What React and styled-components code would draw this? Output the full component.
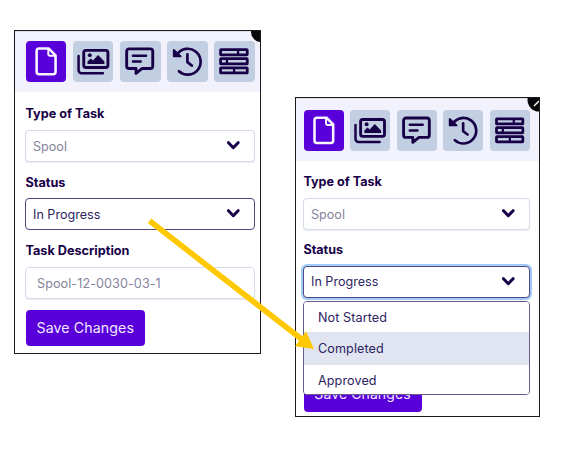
import React from "react";
import styled, { createGlobalStyle, css } from "styled-components";

const Global = createGlobalStyle`
  *, *::before, *::after { box-sizing: border-box; }
  body { margin: 0; background: #fff; font-family: Inter, "Liberation Sans", sans-serif; color: #180048; }
`;

const Canvas = styled.main`
  position: relative;
  display: flex;
  align-items: flex-start;
  gap: 34px;
  width: 572px;
  height: 451px;
  padding: 30px 0 0 14px;
  overflow: hidden;
`;

const Panel = styled.section`
  position: relative;
  display: flex;
  flex-direction: column;
  flex: none;
  width: ${(p) => (p.$second ? 245 : 247)}px;
  height: ${(p) => (p.$second ? 320 : 324)}px;
  margin-top: ${(p) => (p.$second ? 67 : 0)}px;
  border: 1px solid #1c1820;
  background: #fff;
  overflow: hidden;
`;

const Toolbar = styled.nav`
  display: flex;
  justify-content: space-between;
  flex: none;
  height: ${(p) => (p.$second ? 63 : 61)}px;
  padding: ${(p) => (p.$second ? "12px 9px 0 7.5px" : "10px 5px 0 10.5px")};
  background: #f2f2fc;
  box-shadow: inset 0 1px #dfdfe7;
`;

const Tool = styled.button`
  display: block;
  width: ${(p) => (p.$second ? 40.3 : 40.8)}px;
  height: 41px;
  padding: 0;
  border: 0;
  border-radius: 4px;
  background: ${(p) => (p.$active ? "#5900da" : "#c2cee1")};
  color: ${(p) => (p.$active ? "#f8f5ff" : "#180048")};
  svg { display: block; width: 100%; height: 100%; }
`;

const Form = styled.div`
  display: flex;
  flex-direction: column;
  align-items: flex-start;
  padding: ${(p) => (p.$second ? "13px 9px 0 7px" : "13px 5px 0 10px")};
`;

const Label = styled.label`
  height: 16px;
  margin-bottom: ${(p) => p.$after || 9}px;
  padding-left: .4px;
  font-size: ${(p) => (p.$second ? 12.6 : 12.7)}px;
  font-weight: 700;
  line-height: ${(p) => (p.$second ? 16 : 17)}px;
  white-space: nowrap;
`;

const Field = styled.div`
  display: flex;
  align-items: center;
  justify-content: space-between;
  flex: none;
  width: 100%;
  height: 32px;
  margin-bottom: ${(p) => p.$after || 12}px;
  padding: 0 14px ${(p) => (p.$focus ? 1 : 0)}px ${(p) => (p.$indent ? 11 : 7)}px;
  border: 1px solid #d4dcea;
  border-radius: 4px;
  background: #fff;
  box-shadow: 0 1px 1px #e8ebf2;
  color: #85849c;
  font-size: 12.6px;
  letter-spacing: ${(p) => (p.$indent ? ".08px" : "0")};
  ${(p) => p.$enabled && css`
    border-color: #514782;
    box-shadow: none;
    color: #2e1f62;
  `}
  ${(p) => p.$focus && css`
    box-shadow: 0 0 0 2px #9fccf5;
  `}
  svg { width: 14px; height: 10px; margin-bottom: 2px; color: #180048; }
`;

const SaveButton = styled.button`
  width: ${(p) => (p.$second ? 118 : 119.5)}px;
  height: 36px;
  margin-left: .5px;
  padding: 0 0 ${(p) => (p.$second ? 1 : 2)}px;
  border: 0;
  border-radius: 4px;
  background: #5900da;
  color: #f0e8ff;
  font: ${(p) => (p.$second ? 14 : 14.2)}px Inter, sans-serif;
  letter-spacing: .1px;
  white-space: nowrap;
`;

const Menu = styled.div`
  position: absolute;
  left: 7px;
  top: 203px;
  width: 227px;
  height: 94px;
  border: 1px solid #655b8e;
  border-radius: 4px;
  background: #fff;
  overflow: hidden;
`;

const Option = styled.div`
  display: flex;
  align-items: center;
  height: ${(p) => (p.$selected ? 33 : 30)}px;
  padding-left: 14px;
  background: ${(p) => (p.$selected ? "#e1e5f1" : "#fff")};
  color: #2c2260;
  font-size: 12.6px;
  letter-spacing: .1px;
`;

const Corner = styled.svg`
  position: absolute;
  top: 0;
  right: 0;
  width: 12px;
  height: 15px;
`;

const Arrow = styled.svg`
  position: absolute;
  left: 0;
  top: 0;
  width: 572px;
  height: 451px;
  pointer-events: none;
`;

const strokeProps = { fill: "none", stroke: "currentColor", strokeWidth: 2.9, strokeLinecap: "round", strokeLinejoin: "round" };

const FileIcon = () => (
  <svg viewBox="0 0 41 41" {...strokeProps}>
    <path strokeWidth="2.6" d="M13.2 7.5h9.7l6.8 6.8v16.5a2.5 2.5 0 0 1-2.5 2.5h-14a2.5 2.5 0 0 1-2.5-2.5V10a2.5 2.5 0 0 1 2.5-2.5Z" />
    <path strokeWidth="2" d="M22.4 8v5.3c0 .9.6 1.5 1.5 1.5h5.3" />
  </svg>
);

const ImagesIcon = () => (
  <svg viewBox="0 0 41 41" {...strokeProps}>
    <rect x="10.8" y="9.3" width="24.3" height="17.2" rx="2.2" />
    <path strokeWidth="2.5" d="M5.6 15v14.2a3 3 0 0 0 3 3h21.5" />
    <circle cx="16.9" cy="14.1" r="2" fill="currentColor" stroke="none" />
    <path d="M14.6 23v-2.4l3.2-3.2 2.3 2.1 5.1-5.5 6.4 6.5V23Z" fill="currentColor" stroke="none" />
  </svg>
);

const CommentIcon = () => (
  <svg viewBox="0 0 41 41" {...strokeProps}>
    <path d="M9.2 7.8h21.2a2.5 2.5 0 0 1 2.5 2.5v14.7a2.5 2.5 0 0 1-2.5 2.5h-8.1l-6.2 5v-5h-6.9a2.5 2.5 0 0 1-2.5-2.5V10.3a2.5 2.5 0 0 1 2.5-2.5Z" />
    <path strokeWidth="2.5" d="M13 14.7h13.2M13 20.4h7.8" />
  </svg>
);

const HistoryIcon = () => (
  <svg viewBox="0 0 41 41" {...strokeProps}>
    <path strokeWidth="2.7" d="M10.2 13.2A13 13 0 1 1 12 30.3" />
    <path d="M6.8 8.8v6.5h7Z" fill="currentColor" strokeWidth="1.8" />
    <path strokeWidth="2.7" d="M20.5 13.2v8l4.5 3.4" />
  </svg>
);

const StackIcon = () => (
  <svg viewBox="0 0 41 41" {...strokeProps} strokeWidth="2.8">
    <rect x="6.6" y="8.6" width="26.8" height="5.2" rx=".5" />
    <rect x="6.6" y="17.7" width="26.8" height="5.2" rx=".5" />
    <rect x="6.6" y="26.8" width="26.8" height="5.2" rx=".5" />
    <path strokeWidth="2.3" strokeLinecap="butt" d="M24.2 8.6v5.2M13 17.7v5.2M20.2 26.8V32" />
  </svg>
);

const Chevron = () => (
  <svg viewBox="0 0 14 10" {...strokeProps} strokeWidth="3">
    <path d="m2.5 2.7 4.8 5 4.8-5" />
  </svg>
);

const icons = [
  ["Details", FileIcon],
  ["Images", ImagesIcon],
  ["Comments", CommentIcon],
  ["History", HistoryIcon],
  ["Checklist", StackIcon],
];

const Tools = ({ second }) => (
  <Toolbar $second={second}>
    {icons.map(([name, Icon], index) => (
      <Tool key={name} aria-label={name} $active={index === 0} $second={second}><Icon /></Tool>
    ))}
  </Toolbar>
);

export default function App() {
  return (
    <>
      <Global />
      <Canvas>
        <Panel>
          <Tools />
          <Form>
            <Label>Type of Task</Label>
            <Field>Spool<Chevron /></Field>
            <Label $after={8}>Status</Label>
            <Field $enabled>In Progress<Chevron /></Field>
            <Label>Task Description</Label>
            <Field $indent $after={11}>Spool-12-0030-03-1</Field>
            <SaveButton>Save Changes</SaveButton>
          </Form>
          <Corner viewBox="0 0 12 15"><circle cx="13" cy="1" r="10" fill="#08080b" /></Corner>
        </Panel>
        <Panel $second>
          <Tools second />
          <Form $second>
            <Label $second $after={8}>Type of Task</Label>
            <Field>Spool<Chevron /></Field>
            <Label $second $after={8}>Status</Label>
            <Field $enabled $focus $after={78}>In Progress<Chevron /></Field>
            <SaveButton $second>Save Changes</SaveButton>
          </Form>
          <Menu>
            <Option>Not Started</Option>
            <Option $selected>Completed</Option>
            <Option>Approved</Option>
          </Menu>
          <Corner viewBox="0 0 12 15">
            <circle cx="12" cy="2" r="11.5" fill="#08080b" />
            <path d="m7 8 5-5" stroke="#fff" strokeWidth="1.5" />
          </Corner>
        </Panel>
        <Arrow viewBox="0 0 572 451">
          <path d="M149.5 220.8 304 341" stroke="#ffc800" strokeWidth="5.6" />
          <path d="M314 349 295 346.3 306 331.2Z" fill="#ffc800" />
        </Arrow>
      </Canvas>
    </>
  );
}
